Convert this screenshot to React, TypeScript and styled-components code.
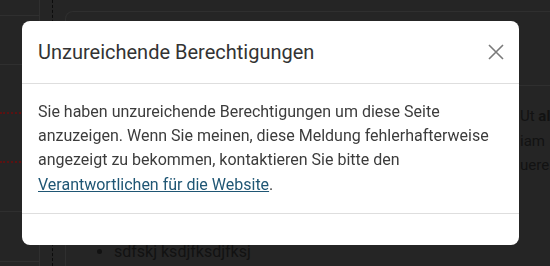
import React from "react";
import styled, { createGlobalStyle } from "styled-components";

const GlobalStyle = createGlobalStyle`
  html, body {
    margin: 0;
    padding: 0;
    background: #252525;
    font-family: Roboto, "Liberation Sans", sans-serif;
    overflow: hidden;
  }
`;

const Page = styled.div`
  display: flex;
  height: 266px;
  background: #252525;
`;

const Sidebar = styled.div`
  width: 39px;
  flex-shrink: 0;
  border-right: 1px solid #2f2f2f;
  display: flex;
  flex-direction: column;
`;

const SideRow = styled.div<{ h: number }>`
  height: ${(p) => p.h}px;
  flex-shrink: 0;
  box-sizing: border-box;
  border-bottom: 1px solid #2f2f2f;
`;

const Gutter = styled.div`
  width: 25px;
  flex-shrink: 0;
  display: flex;
  justify-content: center;
`;

const DashedLine = styled.div`
  width: 0;
  border-left: 1px dashed #0c0c0c;
`;

const Main = styled.div`
  flex: 1;
  padding-top: 11px;
  min-width: 0;
`;

const Card = styled.div`
  height: 100%;
  border: 1px solid #2f2f2f;
  border-right: none;
  border-bottom: none;
  border-top-left-radius: 8px;
  box-sizing: border-box;
`;

const CardHeader = styled.div`
  height: 73px;
  border-bottom: 1px solid #2f2f2f;
`;

const CardBody = styled.div`
  display: grid;
  grid-template-columns: 454px 1fr;
  padding-top: 18px;
  font-size: 15px;
  line-height: 24.5px;
  color: #121212;
  white-space: nowrap;
`;

const Lines = styled.div`
  overflow: hidden;
`;

const BulletList = styled.ul`
  margin: 64px 0 0;
  padding-left: 48px;
  font-size: 16px;
  color: #121212;
`;

const Overlay = styled.div`
  position: fixed;
  inset: 0;
  display: flex;
  align-items: flex-start;
  padding: 21px 0 0 22px;
`;

const Dotted = styled.div<{ top: number }>`
  position: absolute;
  left: 0;
  width: 24px;
  top: ${(p) => p.top}px;
  border-top: 2px dotted #5c1111;
`;

const Modal = styled.div`
  width: 497px;
  background: #fff;
  border-radius: 8px;
  display: flex;
  flex-direction: column;
  position: relative;
`;

const ModalHeader = styled.div`
  display: flex;
  align-items: center;
  justify-content: space-between;
  padding: 16px 15px 16px 16px;
  border-bottom: 1px solid #dedede;
`;

const Title = styled.h5`
  margin: 0;
  font-size: 20px;
  font-weight: 400;
  line-height: 30px;
  color: #333;
`;

const CloseButton = styled.button`
  border: none;
  background: none;
  padding: 0;
  width: 16px;
  height: 16px;
  display: flex;
  cursor: pointer;
`;

const ModalBody = styled.div`
  padding: 16px;
  font-size: 16px;
  line-height: 24.2px;
  color: #3c3c3c;
  border-bottom: 1px solid #dedede;
`;

const Link = styled.a`
  color: #1f5674;
  text-decoration: underline;
`;

const ModalFooter = styled.div`
  height: 31px;
`;

export default function App() {
  return (
    <>
      <GlobalStyle />
      <Page>
        <Sidebar>
          <SideRow h={16} />
          <SideRow h={49} />
          <SideRow h={147} />
          <SideRow h={50} />
        </Sidebar>
        <Gutter>
          <DashedLine />
        </Gutter>
        <Main>
          <Card>
            <CardHeader />
            <CardBody>
              <div />
              <Lines>
                <div>
                  Ut <b>al</b>
                </div>
                <div>iam</div>
                <div>uere.</div>
              </Lines>
            </CardBody>
            <BulletList>
              <li>sdfskj ksdjfksdjfksj</li>
            </BulletList>
          </Card>
        </Main>
      </Page>
      <Dotted top={112} />
      <Dotted top={161} />
      <Overlay>
        <Modal>
          <ModalHeader>
            <Title>Unzureichende Berechtigungen</Title>
            <CloseButton aria-label="Schließen">
              <svg width="16" height="16" viewBox="0 0 16 16">
                <path d="M1 1L15 15M15 1L1 15" stroke="#7a7a7a" strokeWidth="1.6" />
              </svg>
            </CloseButton>
          </ModalHeader>
          <ModalBody>
            Sie haben unzureichende Berechtigungen um diese Seite anzuzeigen. Wenn Sie meinen, diese
            Meldung fehlerhafterweise angezeigt zu bekommen, kontaktieren Sie bitte den{" "}
            <Link href="#">Verantwortlichen für die Website</Link>.
          </ModalBody>
          <ModalFooter />
        </Modal>
      </Overlay>
    </>
  );
}
